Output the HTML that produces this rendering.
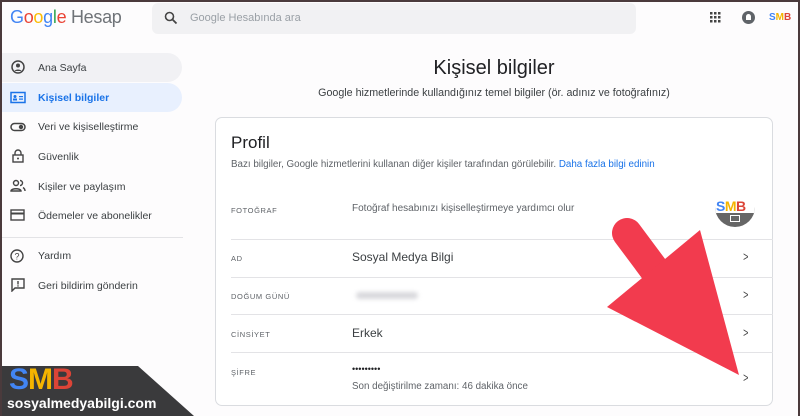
<!DOCTYPE html>
<html><head><meta charset="utf-8"><style>
*{margin:0;padding:0;box-sizing:border-box}
body{width:800px;height:416px;overflow:hidden;background:#fdfcfd;font-family:"Liberation Sans",Arial,sans-serif;position:relative;color:#3c4043}
.a{position:absolute;white-space:nowrap}
.nav{font-size:10.5px;color:#3c4043;left:38px}
.lbl{font-size:7.5px;letter-spacing:.6px;color:#5f6368;left:231px}
.val{left:352px;font-size:12px;color:#3c4043}
.sep{position:absolute;left:231px;width:542px;height:1px;background:#e3e3e6}
.chev{position:absolute;left:742px;font-size:13px;color:#444;transform:scaleX(.7)}
</style></head><body>
<div style="position:absolute;inset:0;border:2px solid #4a3a3c;border-bottom:none;z-index:10;pointer-events:none"></div>
<div class="a" style="left:10px;top:7px;font-size:18px;letter-spacing:-.3px"><span style="color:#4285f4">G</span><span style="color:#ea4335">o</span><span style="color:#fbbc05">o</span><span style="color:#4285f4">g</span><span style="color:#34a853">l</span><span style="color:#ea4335">e</span> <span style="color:#6f7378">Hesap</span></div>
<div style="position:absolute;left:152px;top:3px;width:484px;height:31px;background:#f1f1f3;border-radius:6px"></div>
<svg class="a" style="left:164px;top:11px" width="14" height="14" viewBox="0 0 14 14"><circle cx="5.5" cy="5.5" r="4" fill="none" stroke="#444" stroke-width="1.6"/><path d="M8.5 8.5l4 4" stroke="#444" stroke-width="1.8"/></svg>
<div class="a" style="left:190px;top:12px;font-size:11px;color:#9aa0a6">Google Hesabında ara</div>
<svg class="a" style="left:710px;top:12px" width="11" height="11" viewBox="0 0 11 11" fill="#444"><rect x="0" y="0" width="2.5" height="2.5"/><rect x="4" y="0" width="2.5" height="2.5"/><rect x="8" y="0" width="2.5" height="2.5"/><rect x="0" y="4" width="2.5" height="2.5"/><rect x="4" y="4" width="2.5" height="2.5"/><rect x="8" y="4" width="2.5" height="2.5"/><rect x="0" y="8" width="2.5" height="2.5"/><rect x="4" y="8" width="2.5" height="2.5"/><rect x="8" y="8" width="2.5" height="2.5"/></svg>
<div style="position:absolute;left:742px;top:11px;width:13px;height:13px;border-radius:50%;background:#5f6368"></div>
<div style="position:absolute;left:746px;top:14px;width:5px;height:6px;border-radius:3px 3px 0 0;background:#fff"></div>
<div class="a" style="left:769px;top:12px;font-size:10px;font-weight:bold"><span style="color:#4285f4">S</span><span style="color:#f4b400">M</span><span style="color:#db4437">B</span></div>

<div style="position:absolute;left:2px;top:53px;width:180px;height:29px;background:#f1f1f4;border-radius:0 15px 15px 0"></div>
<div style="position:absolute;left:2px;top:83px;width:180px;height:29px;background:#e8f0fe;border-radius:0 15px 15px 0"></div>
<svg class="a" style="left:11px;top:60px" width="14" height="14" viewBox="0 0 14 14"><circle cx="7" cy="7" r="6" fill="none" stroke="#444" stroke-width="1.5"/><circle cx="7" cy="5.5" r="2" fill="#444"/><path d="M3.5 11c1-2 6-2 7 0" fill="#444"/></svg>
<svg class="a" style="left:10px;top:91px" width="16" height="13" viewBox="0 0 16 13"><rect x="1" y="1.5" width="14" height="10" fill="none" stroke="#1a73e8" stroke-width="1.5"/><circle cx="5" cy="5.5" r="1.5" fill="#1a73e8"/><rect x="3" y="7.5" width="4" height="2" fill="#1a73e8"/><rect x="9" y="5" width="4" height="1.2" fill="#1a73e8"/><rect x="9" y="7.5" width="4" height="1.2" fill="#1a73e8"/></svg>
<svg class="a" style="left:10px;top:122px" width="16" height="10" viewBox="0 0 16 10"><rect x="1" y="1.5" width="14" height="7" rx="3.5" fill="none" stroke="#444" stroke-width="1.5"/><circle cx="11" cy="5" r="2.2" fill="#444"/></svg>
<svg class="a" style="left:12px;top:149px" width="12" height="14" viewBox="0 0 12 14"><rect x="1" y="6" width="10" height="7" fill="none" stroke="#444" stroke-width="1.4"/><path d="M3 6V4a3 3 0 016 0v2" fill="none" stroke="#444" stroke-width="1.4"/><circle cx="6" cy="9.5" r="1" fill="#444"/></svg>
<svg class="a" style="left:10px;top:179px" width="16" height="13" viewBox="0 0 16 13"><circle cx="6" cy="4" r="2.5" fill="none" stroke="#444" stroke-width="1.4"/><path d="M1 12c0-3 10-3 10 0z" fill="none" stroke="#444" stroke-width="1.4"/><path d="M10 1.5a2.5 2.5 0 010 5M13 8.5c1.5 1 2 2 2 3.5" fill="none" stroke="#444" stroke-width="1.4"/></svg>
<svg class="a" style="left:10px;top:209px" width="15" height="12" viewBox="0 0 15 12"><rect x="1" y="1" width="13" height="10" fill="none" stroke="#444" stroke-width="1.4"/><rect x="1" y="3.5" width="13" height="2" fill="#444"/></svg>
<div style="position:absolute;left:2px;top:237px;width:181px;height:1px;background:#e3e3e6"></div>
<svg class="a" style="left:10px;top:249px" width="14" height="14" viewBox="0 0 14 14"><circle cx="7" cy="7" r="6" fill="none" stroke="#444" stroke-width="1.4"/><text x="7" y="10.5" font-size="9" text-anchor="middle" fill="#444" font-family="Liberation Sans">?</text></svg>
<svg class="a" style="left:11px;top:278px" width="14" height="14" viewBox="0 0 14 14"><path d="M1 1h12v9H4l-3 3z" fill="none" stroke="#444" stroke-width="1.4"/><rect x="6.3" y="3" width="1.4" height="3.5" fill="#444"/><rect x="6.3" y="7.3" width="1.4" height="1.3" fill="#444"/></svg>
<div class="a nav" style="top:62px">Ana Sayfa</div>
<div class="a nav" style="top:92px;color:#1a73e8;font-weight:bold">Kişisel bilgiler</div>
<div class="a nav" style="top:121px">Veri ve kişiselleştirme</div>
<div class="a nav" style="top:151px">Güvenlik</div>
<div class="a nav" style="top:181px">Kişiler ve paylaşım</div>
<div class="a nav" style="top:210px">Ödemeler ve abonelikler</div>
<div class="a nav" style="top:250px">Yardım</div>
<div class="a nav" style="top:280px">Geri bildirim gönderin</div>

<div class="a" style="left:0;width:988px;text-align:center;top:57px;font-size:20px;color:#202124">Kişisel bilgiler</div>
<div class="a" style="left:0;width:988px;text-align:center;top:87px;font-size:10.7px;color:#3c4043">Google hizmetlerinde kullandığınız temel bilgiler (ör. adınız ve fotoğrafınız)</div>

<div style="position:absolute;left:215px;top:117px;width:558px;height:289px;border:1px solid #dadce0;border-radius:7px;background:#fff"></div>
<div class="a" style="left:231px;top:133px;font-size:17px;color:#202124">Profil</div>
<div class="a" style="left:231px;top:159px;font-size:9.8px;color:#5f6368">Bazı bilgiler, Google hizmetlerini kullanan diğer kişiler tarafından görülebilir. <span style="color:#1a73e8">Daha fazla bilgi edinin</span></div>
<div class="a lbl" style="top:206px">FOTOĞRAF</div>
<div class="a" style="left:352px;top:203px;font-size:10px;color:#5f6368">Fotoğraf hesabınızı kişiselleştirmeye yardımcı olur</div>
<div style="position:absolute;left:715px;top:199px;width:40px;height:28px;border-radius:0 0 20px 20px;background:#666;overflow:hidden"><div style="height:14px;background:#fff"></div></div>
<div class="a" style="left:716px;top:198px;font-size:14px;font-weight:bold;letter-spacing:-.5px"><span style="color:#4285f4">S</span><span style="color:#f4b400">M</span><span style="color:#db4437">B</span></div>
<div style="position:absolute;left:730px;top:215px;width:10px;height:7px;border:1.5px solid #fff"></div>
<div class="sep" style="top:239px"></div>
<div class="sep" style="top:277px"></div>
<div class="sep" style="top:314px"></div>
<div class="sep" style="top:352px"></div>
<div class="a lbl" style="top:254px">AD</div>
<div class="a val" style="top:250px">Sosyal Medya Bilgi</div>
<div class="a lbl" style="top:292px">DOĞUM GÜNÜ</div>
<div style="position:absolute;left:356px;top:292px;width:62px;height:7px;background:#d8d8dc;border-radius:4px;filter:blur(2px)"></div>
<div class="a lbl" style="top:330px">CİNSİYET</div>
<div class="a val" style="top:326px">Erkek</div>
<div class="a lbl" style="top:368px">ŞİFRE</div>
<div class="a" style="left:352px;top:364px;font-size:9px;color:#202124;letter-spacing:0">•••••••••</div>
<div class="a" style="left:352px;top:381px;font-size:9.8px;color:#5f6368">Son değiştirilme zamanı: 46 dakika önce</div>
<div class="chev" style="top:249px">&gt;</div>
<div class="chev" style="top:287px">&gt;</div>
<div class="chev" style="top:325px">&gt;</div>
<div class="chev" style="top:370px">&gt;</div>

<svg class="a" style="left:0;top:0;z-index:5" width="800" height="416"><line x1="627" y1="233" x2="668" y2="288" stroke="#f23b4e" stroke-width="30" stroke-linecap="round"/><polygon points="607,307 700,230 739,375" fill="#f23b4e"/></svg>

<svg class="a" style="left:0;top:366px;z-index:6" width="200" height="50"><polygon points="0,0 138,0 194,50 0,50" fill="#3a3a3c"/></svg>
<div class="a" style="left:9px;top:366px;z-index:7;font-size:30px;font-weight:bold;line-height:28px;letter-spacing:-1px"><span style="color:#4285f4">S</span><span style="color:#f4b400">M</span><span style="color:#db4437">B</span></div>
<div class="a" style="left:7px;top:395px;z-index:7;font-size:14px;font-weight:bold;color:#fff">sosyalmedyabilgi.com</div>
</body></html>
